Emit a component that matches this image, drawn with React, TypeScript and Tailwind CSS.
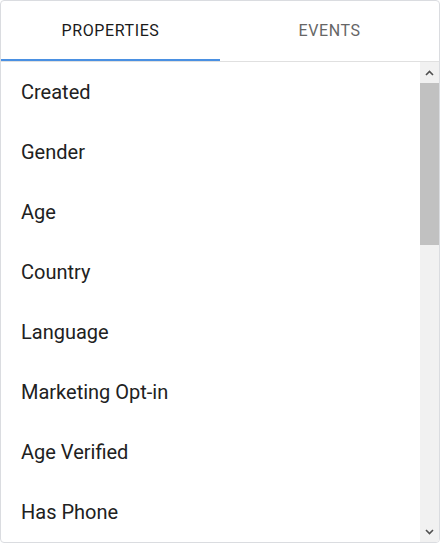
import React, { useState } from "react";

const properties = [
  "Created",
  "Gender",
  "Age",
  "Country",
  "Language",
  "Marketing Opt-in",
  "Age Verified",
  "Has Phone",
];

const Chevron = ({ up }: { up?: boolean }) => (
  <svg width="9" height="6" viewBox="0 0 9 6" className="block">
    <path
      d={up ? "M1 5 L4.5 1.5 L8 5" : "M1 1 L4.5 4.5 L8 1"}
      fill="none"
      stroke="#505050"
      strokeWidth="1.6"
    />
  </svg>
);

export default function App() {
  const [tab, setTab] = useState<"properties" | "events">("properties");

  return (
    <div className="w-[440px] h-[543px] bg-white border border-[#dadce0] rounded-[4px] flex flex-col overflow-hidden font-['Roboto',sans-serif]">
      {/* Tabs */}
      <div className="flex h-[61px] shrink-0 border-b border-[#e0e0e0]">
        {(["properties", "events"] as const).map((t) => (
          <button
            key={t}
            onClick={() => setTab(t)}
            className={`flex-1 flex items-center justify-center border-b-2 pt-[2px] text-[16px] font-normal tracking-[0.6px] uppercase ${
              tab === t
                ? "border-[#4a90e2] text-[#1a1a1a]"
                : "border-transparent text-[#666666]"
            }`}
          >
            {t}
          </button>
        ))}
      </div>

      {/* List + scrollbar */}
      <div className="flex flex-1 min-h-0">
        <ul className="flex-1 overflow-hidden">
          {properties.map((p) => (
            <li
              key={p}
              className="h-[60px] flex items-center pl-[20px] text-[20px] text-[#212121]"
            >
              {p}
            </li>
          ))}
        </ul>
        <div className="w-[19px] shrink-0 bg-[#f1f1f1] flex flex-col">
          <div className="h-[21px] flex items-center justify-center">
            <Chevron up />
          </div>
          <div className="h-[162px] bg-[#c1c1c1]" />
          <div className="flex-1" />
          <div className="h-[21px] flex items-center justify-center">
            <Chevron />
          </div>
        </div>
      </div>
    </div>
  );
}
